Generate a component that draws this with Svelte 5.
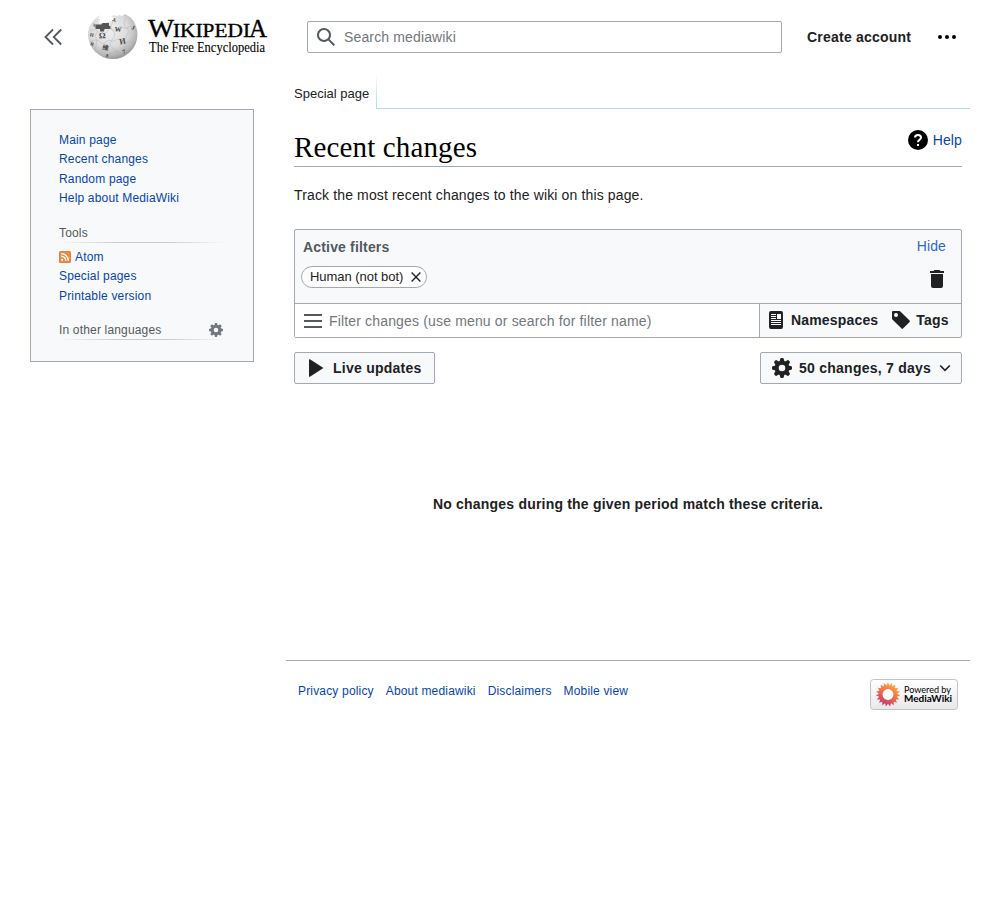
<script>
  const mainLinks = ['Main page', 'Recent changes', 'Random page', 'Help about MediaWiki'];
  const footerLinks = ['Privacy policy', 'About mediawiki', 'Disclaimers', 'Mobile view'];
  const teeth = [0, 45, 90, 135, 180, 225, 270, 315];
  const petals = Array.from({ length: 19 }, (_, i) => (i * 360) / 19);
  const glyphs = [
    { t: 'Ω', x: 11, y: 24.5, s: 8.5, r: -3 },
    { t: 'W', x: 26.5, y: 17.5, s: 7, r: 3 },
    { t: 'И', x: 32, y: 30.5, s: 8, r: -12 },
    { t: '維', x: 14, y: 35.5, s: 6.5, r: 8 },
    { t: 'И', x: 1.5, y: 22, s: 5, r: 15 },
    { t: '7', x: 35, y: 40, s: 6, r: -15 },
    { t: 'J', x: 43, y: 15, s: 6, r: 20 },
    { t: 'እ', x: 24, y: 7, s: 6, r: 20 },
    { t: 'R', x: 2, y: 31, s: 5, r: 20 },
    { t: 'و', x: 18, y: 42, s: 5, r: 0 },
    { t: 'ë', x: 6, y: 13, s: 5, r: -25 }
  ];
</script>

{#snippet gear()}
  <svg class="gear" viewBox="0 0 20 20">
    {#each teeth as a}
      <path d="M7.300 4.500 8.300.700Q8.500 0 9.200 0h1.600q.7 0 .9.700l1 3.800z" transform="rotate({a} 10 10)" />
    {/each}
    <circle cx="10" cy="10" r="5.300" class="ring" />
  </svg>
{/snippet}

<header>
  <svg class="collapse" viewBox="0 0 20 20"><path d="M10 2.500 2.500 10l7.500 7.500M18.200 2.500 10.700 10l7.500 7.500" /></svg>
  <svg class="globe" viewBox="0 0 50 46">
    <defs>
      <radialGradient id="ball" cx="42%" cy="35%" r="70%">
        <stop offset="0" stop-color="#f0f0f0" /><stop offset=".55" stop-color="#dcdcdc" />
        <stop offset=".82" stop-color="#b4b4b4" /><stop offset="1" stop-color="#888" />
      </radialGradient>
    </defs>
    <path fill="url(#ball)" d="M12.500 1 10 4.500l2 1-1 4 6-.500 6-2 4 1V4l-3-1 1-2 4 1 2-1 3 1 3-2 4 2.500 1 .5C46 7 49.500 13 49.500 20.500A24.700 24.500 0 0 1 0 20.500C0 12.500 5 5 12.500 1z" />
    <path d="M7.500 10.500h6l1-1.500h6.500v3h1.500v3h-6l-.5 2.500h-4V15h-4.500z" fill="#555" />
    <path class="seams" d="M2 17q5-3 8 1t9 0q2-5 6-2t7-4q5 4 9 1t8 5M2 28q7-4 10 0t8-2q4 3 8 0t8 3q5-3 11 0M7 38q6-3 9 1t9-1q5-2 8 1t8 0M10 17q-4 5-2 7t0 8 3 7M25 8q-4 5 0 9t-1 9 2 9-1 9M38 4q-4 5 0 9t1 8-2 10 0 10" />
    {#each glyphs as g}
      <text x={g.x} y={g.y} font-size={g.s} transform="rotate({g.r} {g.x} {g.y})">{g.t}</text>
    {/each}
  </svg>
  <svg class="wordmark" viewBox="0 0 120 38">
    <text x="0" y="18.500" font-size="25.500" textLength="26" lengthAdjust="spacingAndGlyphs">W</text>
    <text x="25" y="18.500" font-size="18.500" textLength="77" lengthAdjust="spacingAndGlyphs">IKIPEDI</text>
    <text x="101" y="18.500" font-size="26" textLength="18" lengthAdjust="spacingAndGlyphs">A</text>
    <text class="tagline" x="1" y="33.500" font-size="14" textLength="116" lengthAdjust="spacingAndGlyphs">The Free Encyclopedia</text>
  </svg>
  <div class="search">
    <svg viewBox="0 0 20 20"><path fill-rule="evenodd" d="M12.200 13.600a7 7 0 1 1 1.400-1.400l5.400 5.400-1.400 1.400zM3 8a5 5 0 1 0 10 0A5 5 0 0 0 3 8" /></svg>
    <span>Search mediawiki</span>
  </div>
  <b class="account">Create account</b>
  <svg class="dots" viewBox="0 0 20 20"><circle cx="3" cy="10" r="2" /><circle cx="10" cy="10" r="2" /><circle cx="17" cy="10" r="2" /></svg>
</header>

<div class="layout">
  <aside>
    <nav>{#each mainLinks as l}<a href="#top">{l}</a>{/each}</nav>
    <h3>Tools</h3>
    <nav class="tools">
      <a href="#top"><svg class="feed" viewBox="0 0 12 12"><rect width="12" height="12" rx="1.500" fill="#e57b32" /><rect x=".7" y=".7" width="10.600" height="10.600" rx="1" fill="#f3995b" opacity=".5" /><circle cx="3.200" cy="8.800" r="1.100" fill="#fff" /><path d="M2.200 5.200a4.600 4.600 0 0 1 4.600 4.600M2.200 2.600a7.200 7.200 0 0 1 7.200 7.200" fill="none" stroke="#fff" stroke-width="1.400" /></svg>Atom</a>
      <a href="#top">Special pages</a>
      <a href="#top">Printable version</a>
    </nav>
    <h3 class="langs">In other languages {@render gear()}</h3>
  </aside>

  <main>
    <div class="tabs"><span>Special page</span><i></i></div>
    <article>
      <div class="title">
        <h1>Recent changes</h1>
        <a class="help" href="#top">
          <svg viewBox="0 0 20 20"><circle cx="10" cy="10" r="10" /><path d="M7 7.600C7 5.800 8.300 5 10 5s3 1 3 2.600c0 2.100-3 2.400-3 4.700" fill="none" stroke="#fff" stroke-width="2" /><path d="M9 14h2v2H9z" fill="#fff" /></svg>Help
        </a>
      </div>
      <p>Track the most recent changes to the wiki on this page.</p>

      <section class="filters">
        <div class="active">
          <div class="row"><b>Active filters</b><span class="hide">Hide</span></div>
          <div class="row second">
            <span class="chip">Human (not bot)<svg viewBox="0 0 10 10"><path d="M.6.600 9.400 9.400M9.400.600.600 9.400" /></svg></span>
            <svg class="trash" viewBox="0 0 20 20"><path d="M17 2h-3.500l-1-1h-5l-1 1H3v2h14zM4 17a2 2 0 0 0 2 2h8a2 2 0 0 0 2-2V5H4z" /></svg>
          </div>
        </div>
        <div class="entry">
          <div class="field">
            <svg viewBox="0 0 20 20"><path d="M1 3h18v2H1zm0 6h18v2H1zm0 6h18v2H1z" /></svg>
            <span>Filter changes (use menu or search for filter name)</span>
          </div>
          <div class="views">
            <svg viewBox="0 0 20 20"><path fill-rule="evenodd" d="M5 1a2 2 0 0 0-2 2v14a2 2 0 0 0 2 2h10a2 2 0 0 0 2-2V3a2 2 0 0 0-2-2zm0 3h5v1H5zm0 2h5v1H5zm0 2h5v1H5zm10 7H5v-1h10zm0-2H5v-1h10zm0-2H5v-1h10zm0-2h-4V4h4z" /></svg><b>Namespaces</b>
            <svg class="tag" viewBox="0 0 20 20"><path fill-rule="evenodd" d="M2 1h6.500q.5 0 .9.400l9.200 9.200q.7.700 0 1.400l-6.600 6.600q-.7.700-1.400 0L1.400 9.400Q1 9 1 8.500V2q0-1 1-1zm3 2a2 2 0 1 0 0 4 2 2 0 0 0 0-4z" /></svg><b>Tags</b>
          </div>
        </div>
      </section>

      <div class="actions">
        <button class="live"><svg viewBox="0 0 20 20"><path d="M3 1.800q0-1 .9-.500L17.500 10 3.900 18.700q-.9.500-.9-.500z" /></svg>Live updates</button>
        <button class="count">{@render gear()}50 changes, 7 days<svg class="down" viewBox="0 0 12 12"><path d="m1.200 3.500 4.800 4.800 4.800-4.800" /></svg></button>
      </div>
      <p class="empty">No changes during the given period match these criteria.</p>
    </article>
    <footer>
      {#each footerLinks as l}<a href="#top">{l}</a>{/each}
      <svg class="powered" viewBox="0 0 88 31">
        <defs>
          <linearGradient id="badge" x2="0" y2="1"><stop stop-color="#fff" /><stop offset="1" stop-color="#e8e8e8" /></linearGradient>
          <linearGradient id="flower" gradientUnits="userSpaceOnUse" x1="24" y1="4" x2="12" y2="27"><stop stop-color="#ffb03b" /><stop offset=".5" stop-color="#f26b4a" /><stop offset="1" stop-color="#b4357c" /></linearGradient>
          <mask id="petals"><g fill="#fff">{#each petals as p}<path d="M15.800 8 18 3.300l2.200 4.700z" transform="rotate({p} 18 15.500)" />{/each}<circle cx="18" cy="15.500" r="9.200" /></g><circle cx="18" cy="15.500" r="5.400" fill="#000" /></mask>
        </defs>
        <rect x=".5" y=".5" width="87" height="30" rx="3" fill="url(#badge)" stroke="#c4c4c4" />
        <circle cx="18" cy="15.500" r="6" fill="#fff" />
        <rect x="4" y="2" width="28" height="27" fill="url(#flower)" mask="url(#petals)" />
        <text x="34" y="13.500" font-size="10" textLength="47" lengthAdjust="spacingAndGlyphs">Powered by</text>
        <text x="34" y="23" font-size="10" font-weight="700" textLength="48" lengthAdjust="spacingAndGlyphs">MediaWiki</text>
      </svg>
    </footer>
  </main>
</div>

<style>
  :global(body) { margin: 0; background: #fff; color: #202122; font: 14px/22px "Liberation Sans", Arial, sans-serif; letter-spacing: .14px; }
  * { box-sizing: border-box; }
  svg { display: block; flex: none; width: 20px; height: 20px; fill: #202122; overflow: visible; letter-spacing: 0; }
  a { color: #0645ad; text-decoration: none; }
  b { letter-spacing: .17px; }
  header { display: flex; align-items: center; height: 74px; padding: 0 43px; }
  .collapse { fill: none; stroke: #54595d; stroke-width: 1.8; }
  .globe { width: 50px; height: 46px; margin: 0 10px 0 25px; }
  .globe text { font-family: "Liberation Serif", "Noto Sans CJK SC", serif; fill: #444; font-weight: 700; }
  .seams { fill: none; stroke: #aaa; stroke-width: .4; }
  .wordmark { width: 120px; height: 38px; }
  .wordmark text { font-family: "Liberation Serif", serif; fill: #000; stroke: #000; stroke-width: .35; }
  .wordmark .tagline { stroke-width: .1; }
  .search { display: flex; align-items: center; width: 475px; height: 32px; margin-left: 39px; padding-left: 8px; gap: 8px; border: 1px solid #a2a9b1; border-radius: 2px; color: #72777d; }
  .search svg { fill: #54595d; }
  .account { margin-left: 25px; white-space: nowrap; letter-spacing: .22px; }
  .dots { margin-left: auto; fill: #000; }
  .layout { display: grid; grid-template-columns: 224px 684px; gap: 32px; padding: 0 30px; }
  aside { height: 253px; margin-top: 35px; padding: 21px 28px; border: 1px solid #a2a9b1; background: #f8f9fb; font-size: 12px; line-height: 19.4px; letter-spacing: .17px; }
  aside a { display: flex; align-items: center; height: 19.4px; }
  .tools a { height: 19.6px; }
  h3 { height: 19px; margin: 15px 0 5px; color: #54595d; font-size: 12px; font-weight: 400; line-height: 19px; border-bottom: 1px solid; border-image: linear-gradient(90deg, transparent, #c8ccd1 35%, #c8ccd1 65%, transparent) 1; }
  .feed { width: 12px; height: 12px; margin-right: 4px; }
  .langs { display: flex; justify-content: space-between; align-items: center; margin-top: 14.4px; line-height: 20px; }
  .langs .gear { width: 14px; height: 14px; --gear: #72777d; margin-right: 2px; }
  .gear { fill: var(--gear, #202122); }
  .ring { fill: none; stroke: var(--gear, #202122); stroke-width: 4; }
  .tabs { display: flex; height: 35px; padding-left: 8px; font-size: 13px; letter-spacing: 0; }
  .tabs span { width: 82px; padding-top: 9px; white-space: nowrap; }
  .tabs i { flex: 1; border: solid; border-width: 0 0 1px 1px; border-image: linear-gradient(transparent, #a7d7f9) 1; }
  article { height: 551px; padding: 15px 8px 0; }
  .title { display: flex; justify-content: space-between; height: 43px; border-bottom: 1px solid #a2a9b1; }
  h1 { margin: 4px 0 0; color: #000; font: 29px/38px "Liberation Serif", serif; }
  .help { display: flex; gap: 5px; height: 20px; margin-top: 6px; line-height: 21px; }
  .help svg { fill: #000; }
  p { margin: 17px 0 23px; }
  .filters { height: 109px; border: 1px solid #a2a9b1; border-radius: 2px; background: #f8f9fb; }
  .active { height: 73px; padding: 6px 15px 0 8px; color: #54595d; }
  .row { display: flex; justify-content: space-between; }
  .hide { color: #36c; line-height: 20px; }
  .second { margin: 8px 0 0 -2px; }
  .chip { display: flex; align-items: center; justify-content: space-between; width: 126px; height: 22px; padding: 0 5px 0 8px; border: 1px solid #a2a9b1; border-radius: 12px; background: #fff; color: #202122; font-size: 13px; line-height: 24px; letter-spacing: -.04px; white-space: nowrap; }
  .chip svg { width: 10px; height: 10px; fill: none; stroke: #202122; stroke-width: 1.4; }
  .trash { margin: 3px -1px 0 0; }
  .entry { display: flex; height: 34px; border-top: 1px solid #a2a9b1; }
  .field { display: flex; align-items: center; width: 465px; padding-left: 8px; gap: 6px; background: #fff; border-right: 1px solid #a2a9b1; color: #72777d; white-space: nowrap; letter-spacing: .16px; }
  .field svg { fill: #54595d; }
  .views { display: flex; align-items: center; padding: 0 0 2px 6px; gap: 5px; }
  .views .tag { margin-left: 8px; }
  .actions { display: flex; justify-content: space-between; margin-top: 14px; }
  button { display: flex; align-items: center; height: 32px; padding: 0 0 0 11px; gap: 7px; border: 1px solid #a2a9b1; border-radius: 2px; background: #f8f9fb; color: #202122; font: 700 14px "Liberation Sans", sans-serif; letter-spacing: .25px; white-space: nowrap; }
  .live { width: 141px; }
  .count { width: 202px; }
  .down { width: 12px; height: 12px; margin-left: 1px; fill: none; stroke: #202122; stroke-width: 1.6; }
  .empty { margin: 109px 0 0; text-align: center; font-weight: 700; letter-spacing: .2px; }
  footer { display: flex; gap: 12px; padding: 18px 12px 0; border-top: 1px solid #a2a9b1; font-size: 12px; line-height: 24px; letter-spacing: .17px; }
  .powered { width: 88px; height: 31px; margin-left: auto; }
  .powered text { font-family: Lato, sans-serif; fill: #000; }
</style>
